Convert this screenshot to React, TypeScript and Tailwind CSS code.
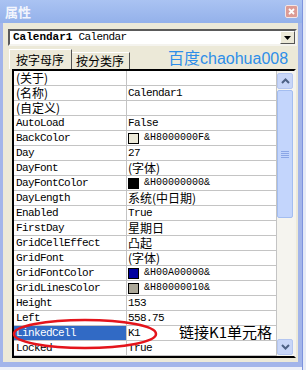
import type { ReactNode } from 'react';

type Row = { name: string; value?: string; swatch?: string; hex?: string };

const ROWS: Row[] = [
  { name: '(关于)' },
  { name: '(名称)', value: 'Calendar1' },
  { name: '(自定义)' },
  { name: 'AutoLoad', value: 'False' },
  { name: 'BackColor', swatch: 'bg-[#ece9d8]', hex: '&H8000000F&' },
  { name: 'Day', value: '27' },
  { name: 'DayFont', value: '(字体)' },
  { name: 'DayFontColor', swatch: 'bg-black', hex: '&H00000000&' },
  { name: 'DayLength', value: '系统(中日期)' },
  { name: 'Enabled', value: 'True' },
  { name: 'FirstDay', value: '星期日' },
  { name: 'GridCellEffect', value: '凸起' },
  { name: 'GridFont', value: '(字体)' },
  { name: 'GridFontColor', swatch: 'bg-[#0000a0]', hex: '&H00A00000&' },
  { name: 'GridLinesColor', swatch: 'bg-[#aca899]', hex: '&H80000010&' },
  { name: 'Height', value: '153' },
  { name: 'Left', value: '558.75' },
  { name: 'LinkedCell', value: 'K1' },
  { name: 'Locked', value: 'True' },
];

const MONO = "font-['Liberation_Mono',monospace] text-[11px] leading-none tracking-[-0.6px]";
const CJK = "font-['Noto_Sans_CJK_SC',sans-serif] text-[12px] leading-none";

function CellText({ text }: { text: string }) {
  const cjk = /[\u4e00-\u9fff]/.test(text);
  return <span className={cjk ? CJK : MONO}>{text}</span>;
}

function ScrollButton({ children }: { children: ReactNode }) {
  return (
    <div className="flex h-[16px] w-[16px] items-center justify-center rounded-[2px] border border-[#b4c6f0] bg-[#c8d6f8]">
      {children}
    </div>
  );
}

function Scrollbar() {
  return (
    <div className="flex w-[17px] flex-col bg-[#f5f4ef] pt-[2px] pb-[1px]">
      <ScrollButton>
        <svg width="9" height="6" viewBox="0 0 9 6">
          <path d="M1 5 L4.5 1.5 L8 5" fill="none" stroke="#4d6185" strokeWidth="2" />
        </svg>
      </ScrollButton>
      <div className="mt-[1px] flex h-[128px] w-[16px] items-center justify-center rounded-[2px] border border-[#a3bdf0] bg-[#c3d5fc]">
        <div className="flex flex-col gap-[1px]">
          <div className="h-[1px] w-[8px] bg-[#8ba6e6]" />
          <div className="h-[1px] w-[8px] bg-[#8ba6e6]" />
          <div className="h-[1px] w-[8px] bg-[#8ba6e6]" />
          <div className="h-[1px] w-[8px] bg-[#8ba6e6]" />
        </div>
      </div>
      <div className="flex-1" />
      <ScrollButton>
        <svg width="9" height="6" viewBox="0 0 9 6">
          <path d="M1 1 L4.5 4.5 L8 1" fill="none" stroke="#4d6185" strokeWidth="2" />
        </svg>
      </ScrollButton>
    </div>
  );
}

export default function App() {
  return (
    <div className="flex h-[370px] w-[306px] overflow-hidden bg-[#eef1f9] leading-none">
      <div className="flex h-[367px] w-[302px] flex-col bg-[#a3b5ea]">
        {/* title bar */}
        <div className="flex h-[23px] shrink-0 items-center justify-between bg-gradient-to-b from-[#aac3f2] to-[#94b1ea] pl-[5px] pr-[4px]">
          <span className="font-['Noto_Sans_CJK_SC',sans-serif] text-[13px] font-bold leading-none text-[#f2f5fd]">属性</span>
          <div className="flex h-[13px] w-[13px] items-center justify-center rounded-[2px] border border-[#f3e6e6] bg-[#dc9b95]">
            <svg width="7" height="7" viewBox="0 0 7 7">
              <path d="M1 1 L6 6 M6 1 L1 6" stroke="white" strokeWidth="1.8" />
            </svg>
          </div>
        </div>

        {/* window body */}
        <div className="ml-[3px] mr-[4px] flex flex-1 flex-col bg-[#ece9d8] pb-[3px]">
          {/* object combo */}
          <div className="ml-[5px] mr-[1px] mt-[6px] flex h-[17px] items-center border-2 border-t-[#5a5a5a] border-l-[#5a5a5a] border-r-[#f4f3ee] border-b-[#f4f3ee] bg-white">
            <span className="pl-[3px] font-['Liberation_Mono',monospace] text-[11px] font-bold leading-none">Calendar1</span>
            <span className={MONO}>&nbsp;Calendar</span>
            <div className="ml-auto flex h-[13px] w-[15px] items-center justify-center border border-t-white border-l-white border-r-[#555] border-b-[#555] bg-[#ece9d8]">
              <svg width="7" height="4" viewBox="0 0 7 4">
                <path d="M0 0 H7 L3.5 4 Z" fill="black" />
              </svg>
            </div>
          </div>

          {/* tabs */}
          <div className="ml-[6px] mt-[3px] flex h-[20px] items-end">
            <div className="flex h-[20px] w-[63px] items-center border-l border-t border-r border-l-white border-t-white border-r-[#555] pl-[6px]">
              <span className="font-['Noto_Sans_CJK_SC',sans-serif] text-[12px] leading-none">按字母序</span>
            </div>
            <div className="flex h-[17px] w-[58px] items-center border-t border-r border-t-white border-r-[#555] pl-[4px]">
              <span className="font-['Noto_Sans_CJK_SC',sans-serif] text-[12px] leading-none">按分类序</span>
            </div>
            <span className="mb-[2px] ml-[38px] font-['Liberation_Sans','Noto_Sans_CJK_SC',sans-serif] text-[16px] leading-none text-[#2e8ee8]">
              百度chaohua008
            </span>
          </div>

          {/* property grid */}
          <div className="relative ml-[9px] mr-[2px] flex border-2 border-t-black border-l-black border-b-black border-r-[#f4f3ee] bg-white">
            <div className="flex flex-1 flex-col">
              {ROWS.map((r) => {
                const selected = r.name === 'LinkedCell';
                return (
                  <div key={r.name} className="flex h-[15px] overflow-hidden border-b border-[#c4c4c4] leading-none">
                    <div
                      className={`flex w-[113px] items-center overflow-hidden border-r border-[#c4c4c4] pl-[2px] ${selected ? 'bg-[#316ac5] text-white' : 'text-black'}`}
                    >
                      <CellText text={r.name} />
                    </div>
                    <div className="flex flex-1 items-center overflow-hidden border-r border-[#c4c4c4] pl-[1px]">
                      {r.swatch ? (
                        <>
                          <div className={`h-[11px] w-[11px] border border-black ${r.swatch}`} />
                          <span className="ml-[5px] font-['Liberation_Mono',monospace] text-[10px] leading-none">{r.hex}</span>
                        </>
                      ) : r.value ? (
                        <CellText text={r.value} />
                      ) : null}
                    </div>
                  </div>
                );
              })}
            </div>
            <Scrollbar />

            {/* annotation overlay */}
            <svg className="pointer-events-none absolute left-[-2px] top-[246px]" width="160" height="34" viewBox="0 0 160 34">
              <ellipse cx="73" cy="17" rx="71" ry="14" fill="none" stroke="#e4141b" strokeWidth="2.5" />
            </svg>
            <span className="pointer-events-none absolute left-[165px] top-[253px] font-['Noto_Sans_CJK_SC',sans-serif] text-[15px] leading-none text-black">
              链接K1单元格
            </span>
          </div>
        </div>
        <div className="h-[5px]" />
      </div>
      <div className="flex-1 border-l border-[#7d93de] bg-[#e6ebf7]" />
    </div>
  );
}
